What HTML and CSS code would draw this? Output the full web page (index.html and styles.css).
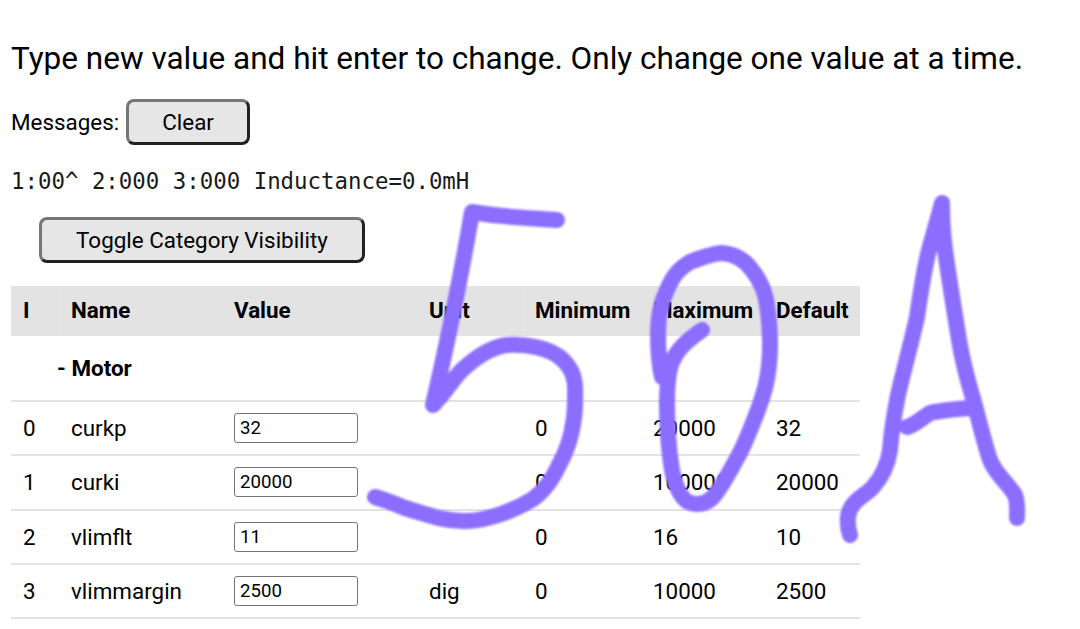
FILE: index.html
```html
<!DOCTYPE html>
<html lang="en">

<head>
  <meta charset="UTF-8">
  <title>Parameters</title>
  <link rel="stylesheet" href="styles.css">
</head>

<body>
  <p class="hint">Type new value and hit enter to change. Only change one value at a time.</p>
  <div class="messages">
    <span>Messages:</span>
    <button class="btn btn-clear" type="button">Clear</button>
  </div>
  <pre class="status">1:00^ 2:000 3:000 Inductance=0.0mH</pre>
  <button class="btn btn-toggle" type="button">Toggle Category Visibility</button>

  <table class="params">
    <thead>
      <tr>
        <th class="col-i">I</th>
        <th class="col-name">Name</th>
        <th class="col-value">Value</th>
        <th class="col-unit">Unit</th>
        <th class="col-min">Minimum</th>
        <th class="col-max">Maximum</th>
        <th class="col-def">Default</th>
      </tr>
    </thead>
    <tbody>
      <tr class="category">
        <td></td>
        <td colspan="6"><span class="toggle">- </span>Motor</td>
      </tr>
      <tr>
        <td>0</td>
        <td>curkp</td>
        <td><input class="val" type="text" value="32"></td>
        <td></td>
        <td>0</td>
        <td>20000</td>
        <td>32</td>
      </tr>
      <tr>
        <td>1</td>
        <td>curki</td>
        <td><input class="val" type="text" value="20000"></td>
        <td></td>
        <td>0</td>
        <td>100000</td>
        <td>20000</td>
      </tr>
      <tr>
        <td>2</td>
        <td>vlimflt</td>
        <td><input class="val" type="text" value="11"></td>
        <td></td>
        <td>0</td>
        <td>16</td>
        <td>10</td>
      </tr>
      <tr>
        <td>3</td>
        <td>vlimmargin</td>
        <td><input class="val" type="text" value="2500"></td>
        <td>dig</td>
        <td>0</td>
        <td>10000</td>
        <td>2500</td>
      </tr>
    </tbody>
  </table>

  <!-- handwriting on top of the page -->
  <svg class="scribble" width="1080" height="629" viewBox="0 0 1080 629">
    <defs>
      <filter id="soft"><feGaussianBlur stdDeviation="0.9"></feGaussianBlur></filter>
    </defs>
    <g class="ink" filter="url(#soft)">
      <path d="M557 220 C530 218 500 217 472 212 C462 270 448 340 433 405 C445 393 452 380 462 370 C475 358 490 347 507 345 C525 344 550 347 563 360 C573 370 576 380 575 395 C576 420 570 445 560 463 C552 480 545 490 533 499 C515 510 490 520 467 521 C445 522 425 514 405 508 C393 503 385 500 375 497"></path>
      <path d="M662 377 C658 360 658 345 658 333 C658 315 662 300 667 290 C673 275 680 268 690 262 C700 258 710 254 722 253 C735 254 745 260 752 270 C760 280 765 290 767 305 C770 325 771 345 769 365 C767 385 763 395 758 410 C750 430 745 445 736 460 C728 475 720 490 712 498 C705 505 695 505 688 502 C680 497 675 485 672 470 C668 445 667 425 667 405 C667 385 668 372 672 362 C677 350 685 342 702 330"></path>
      <path d="M850 535 C847 525 846 515 852 506 C858 497 866 495 873 487 C882 477 888 463 890 450 C892 425 895 410 898 395 C905 365 912 340 917 317 C921 290 925 265 929 250 C934 232 939 215 942 203 C942 220 943 235 945 250 C950 285 955 315 959 340 C963 365 969 385 974 402 C980 425 985 445 990 460 C996 475 1008 483 1015 495 C1018 503 1017 510 1017 518"></path>
      <path d="M907 427 C915 425 922 418 930 413 C943 410 958 409 972 408"></path>
    </g>
  </svg>
</body>

</html>
```

FILE: styles.css
```css
body {
  margin: 11px;
  font-family: Roboto, "Liberation Sans", sans-serif;
  font-size: 22.4px;
  color: #000;
  background: #fff;
  overflow: hidden;
}

.hint {
  margin: 28px 0 0;
  font-size: 31.5px;
  line-height: 40px;
}

.messages {
  display: flex;
  align-items: center;
  gap: 7px;
  margin-top: 20px;
}

.btn {
  height: 46px;
  padding: 0;
  font-family: inherit;
  font-size: 22.4px;
  color: #000;
  background: #e6e6e6;
  border: 3px solid;
  border-color: #767676 #222 #222 #767676;
  border-radius: 8px;
}

.btn-clear {
  width: 124px;
}

.btn-toggle {
  display: block;
  width: 326px;
  margin-left: 28px;
}

.status {
  margin: 23px 0 23px;
  font-family: "DejaVu Sans Mono", "Liberation Mono", monospace;
  font-size: 22.4px;
  line-height: 26px;
  color: #1a1a1a;
}

.params {
  width: 849px;
  margin-top: 23px;
  border-collapse: collapse;
  table-layout: fixed;
}

.params th,
.params td {
  box-sizing: border-box;
  padding: 0 12px;
}

.params th {
  height: 50px;
  padding-bottom: 2px;
  text-align: left;
  font-weight: 700;
  background: #e3e3e3;
  box-shadow: inset 1px 0 0 #e6e6e6;
}

.params td {
  height: 54.25px;
  border-bottom: 2px solid #e3e3e3;
  white-space: nowrap;
}

.col-i { width: 48px; }
.col-name { width: 163px; }
.col-value { width: 195px; }
.col-unit { width: 106px; }
.col-min { width: 118px; }
.col-max { width: 123px; }
.col-def { width: 96px; }

.params .category td {
  height: 65px;
  font-weight: 700;
}

.toggle {
  margin-left: -14px;
}

.val {
  display: block;
  box-sizing: border-box;
  width: 124px;
  height: 30px;
  padding: 0 5px;
  font-family: inherit;
  font-size: 18.67px;
  color: #000;
  background: #fff;
  border: 1.5px solid #767676;
  border-radius: 3px;
}

.scribble {
  position: absolute;
  top: 0;
  left: 0;
  pointer-events: none;
}

.ink path {
  fill: none;
  stroke: #8c6eff;
  stroke-width: 16;
  stroke-linecap: round;
  stroke-linejoin: round;
}
```
